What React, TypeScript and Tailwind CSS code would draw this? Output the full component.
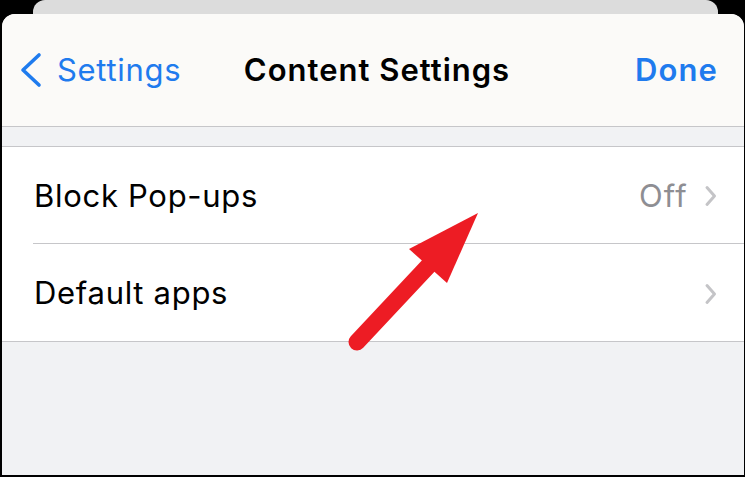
import React from "react";

const font = { fontFamily: "Inter, 'Noto Sans', 'Liberation Sans', sans-serif" };

function Chevron() {
  return (
    <svg width="14" height="24" viewBox="0 0 14 24" className="shrink-0">
      <path d="M3 3.5 L10.5 12 L3 20.5" fill="none" stroke="#c4c4c7" strokeWidth="3" strokeLinecap="round" strokeLinejoin="round" />
    </svg>
  );
}

export default function App() {
  return (
    <div className="w-[745px] h-[477px] bg-black relative overflow-hidden flex flex-col pl-[2px] pr-[1px] pb-[2px]" style={font}>
      <div className="h-[16px] ml-[31px] mr-[26px] bg-[#dcdcdc] rounded-t-[12px] shrink-0" />
      <div className="-mt-[2px] flex-1 rounded-t-[13px] bg-[#f1f2f4] overflow-hidden flex flex-col relative">
        <div className="h-[113px] bg-[#fbfaf8] border-b border-[#c6c6c9] flex items-center justify-between pl-[16px] pr-[26px] relative shrink-0">
          <div className="flex items-center gap-[15px] text-[#1f7bee] text-[31px] tracking-[0.7px]">
            <svg width="24" height="36" viewBox="0 0 24 36">
              <path d="M21 3 L5 18 L21 33" fill="none" stroke="#1f7bee" strokeWidth="3.6" strokeLinecap="round" strokeLinejoin="round" />
            </svg>
            <span>Settings</span>
          </div>
          <div className="absolute left-0 right-0 flex justify-center pointer-events-none">
            <span className="text-[31px] font-semibold text-black tracking-[1px] ml-[8px]">Content Settings</span>
          </div>
          <span className="text-[31px] font-semibold text-[#1f7bee] tracking-[1.1px]">Done</span>
        </div>
        <div className="h-[19px] shrink-0" />
        <div className="bg-white border-t border-b border-[#c6c6c9] shrink-0">
          <div className="h-[96px] flex items-center pl-[32px] pr-[26px]">
            <div className="flex-1 flex items-center justify-between h-full pt-[2px]">
              <span className="text-[31px] text-black tracking-[0.7px]">Block Pop-ups</span>
              <div className="flex items-center gap-[16px]">
                <span className="text-[31px] text-[#8e8e93] tracking-[1.2px]">Off</span>
                <Chevron />
              </div>
            </div>
          </div>
          <div className="ml-[31px] border-t border-[#c6c6c9]" />
          <div className="h-[97px] flex items-center pl-[32px] pr-[26px]">
            <div className="flex-1 flex items-center justify-between h-full pt-[2px]">
              <span className="text-[31px] text-black tracking-[0.7px]">Default apps</span>
              <Chevron />
            </div>
          </div>
        </div>
        <div className="flex-1" />
      </div>
      <svg className="absolute left-0 top-0 pointer-events-none" width="745" height="477" viewBox="0 0 745 477">
        <line x1="357" y1="342" x2="432" y2="262" stroke="#ed1c24" strokeWidth="17" strokeLinecap="round" />
        <polygon points="478,213 409,249 447,283" fill="#ed1c24" />
      </svg>
    </div>
  );
}
